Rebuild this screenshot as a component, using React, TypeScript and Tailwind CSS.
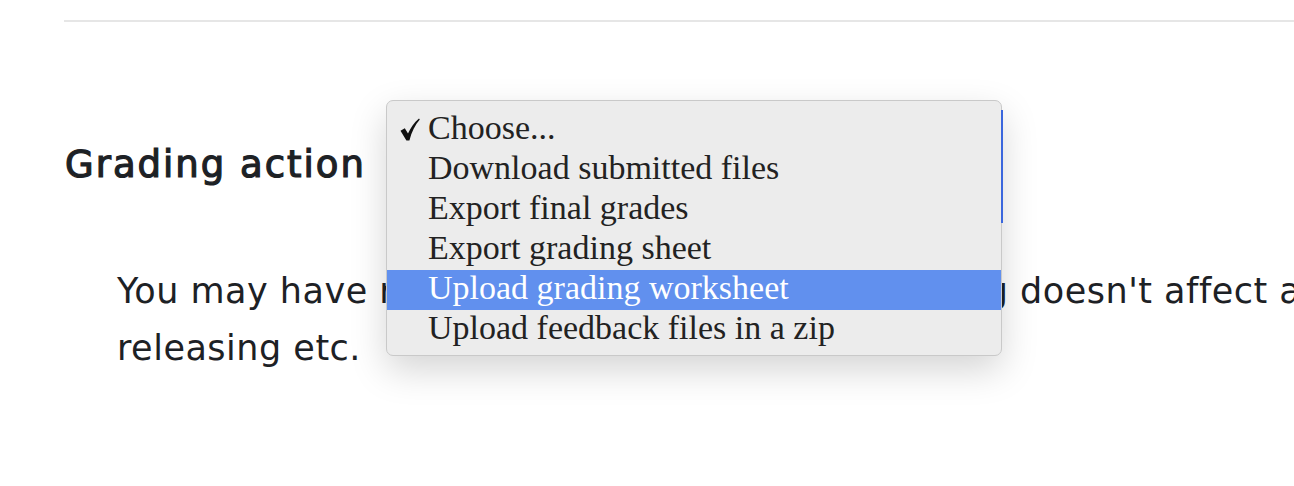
export default function App() {
  const options = [
    "Choose...",
    "Download submitted files",
    "Export final grades",
    "Export grading sheet",
    "Upload grading worksheet",
    "Upload feedback files in a zip",
  ];
  const selected = 0;
  const hovered = 4;

  return (
    <div className="relative w-[1294px] h-[486px] overflow-hidden bg-white text-[#1d2125] font-['DejaVu_Sans',sans-serif]">
      <div className="ml-16 mt-5 border-t-2 border-[#e6e6e6]" />

      <div className="ml-[65px] mt-[121px] flex items-center">
        <h3 className="text-[37px] leading-[43px] font-normal tracking-[2px] [-webkit-text-stroke:1.2px_#1d2125]">
          Grading action
        </h3>
      </div>

      <p className="ml-[117px] mt-[77px] text-[35px] leading-[57px] tracking-[0.5px] whitespace-nowrap">
        You may have released your grades but changing doesn't affect any marking workflow,
        <br />
        releasing etc.
      </p>

      {/* native select popup */}
      <div className="absolute left-[386px] top-[100px] w-[616px] h-[256px] rounded-[7px] border border-[#c9c9c9] bg-[#ececec] pt-[9px] pb-[5px] shadow-[0_14px_36px_rgba(0,0,0,0.17)] font-['Liberation_Serif',serif] text-[34px]">
        {options.map((opt, i) => (
          <div
            key={opt}
            className={
              i === hovered
                ? "relative h-10 leading-[36px] pl-[41px] bg-[#6190ee] text-white"
                : "relative h-10 leading-[36px] pl-[41px] text-[#222222]"
            }
          >
            {i === selected && (
              <svg
                className="absolute left-[13px] top-[8px]"
                width="20"
                height="23"
                viewBox="0 0 20 23"
              >
                <path
                  d="M0.5 12.8 L4.8 10.2 L8 15.6 C10.5 9.8 14 4.6 19 0.4 L19.8 1.4 C15.2 6.6 11.6 13.6 9.4 22.6 L6.4 22.6 Z"
                  fill="#111111"
                />
              </svg>
            )}
            {opt}
          </div>
        ))}
      </div>
      <div className="absolute left-[1001px] top-[110px] w-[2px] h-[113px] bg-[#3a66dd]" />
    </div>
  );
}
